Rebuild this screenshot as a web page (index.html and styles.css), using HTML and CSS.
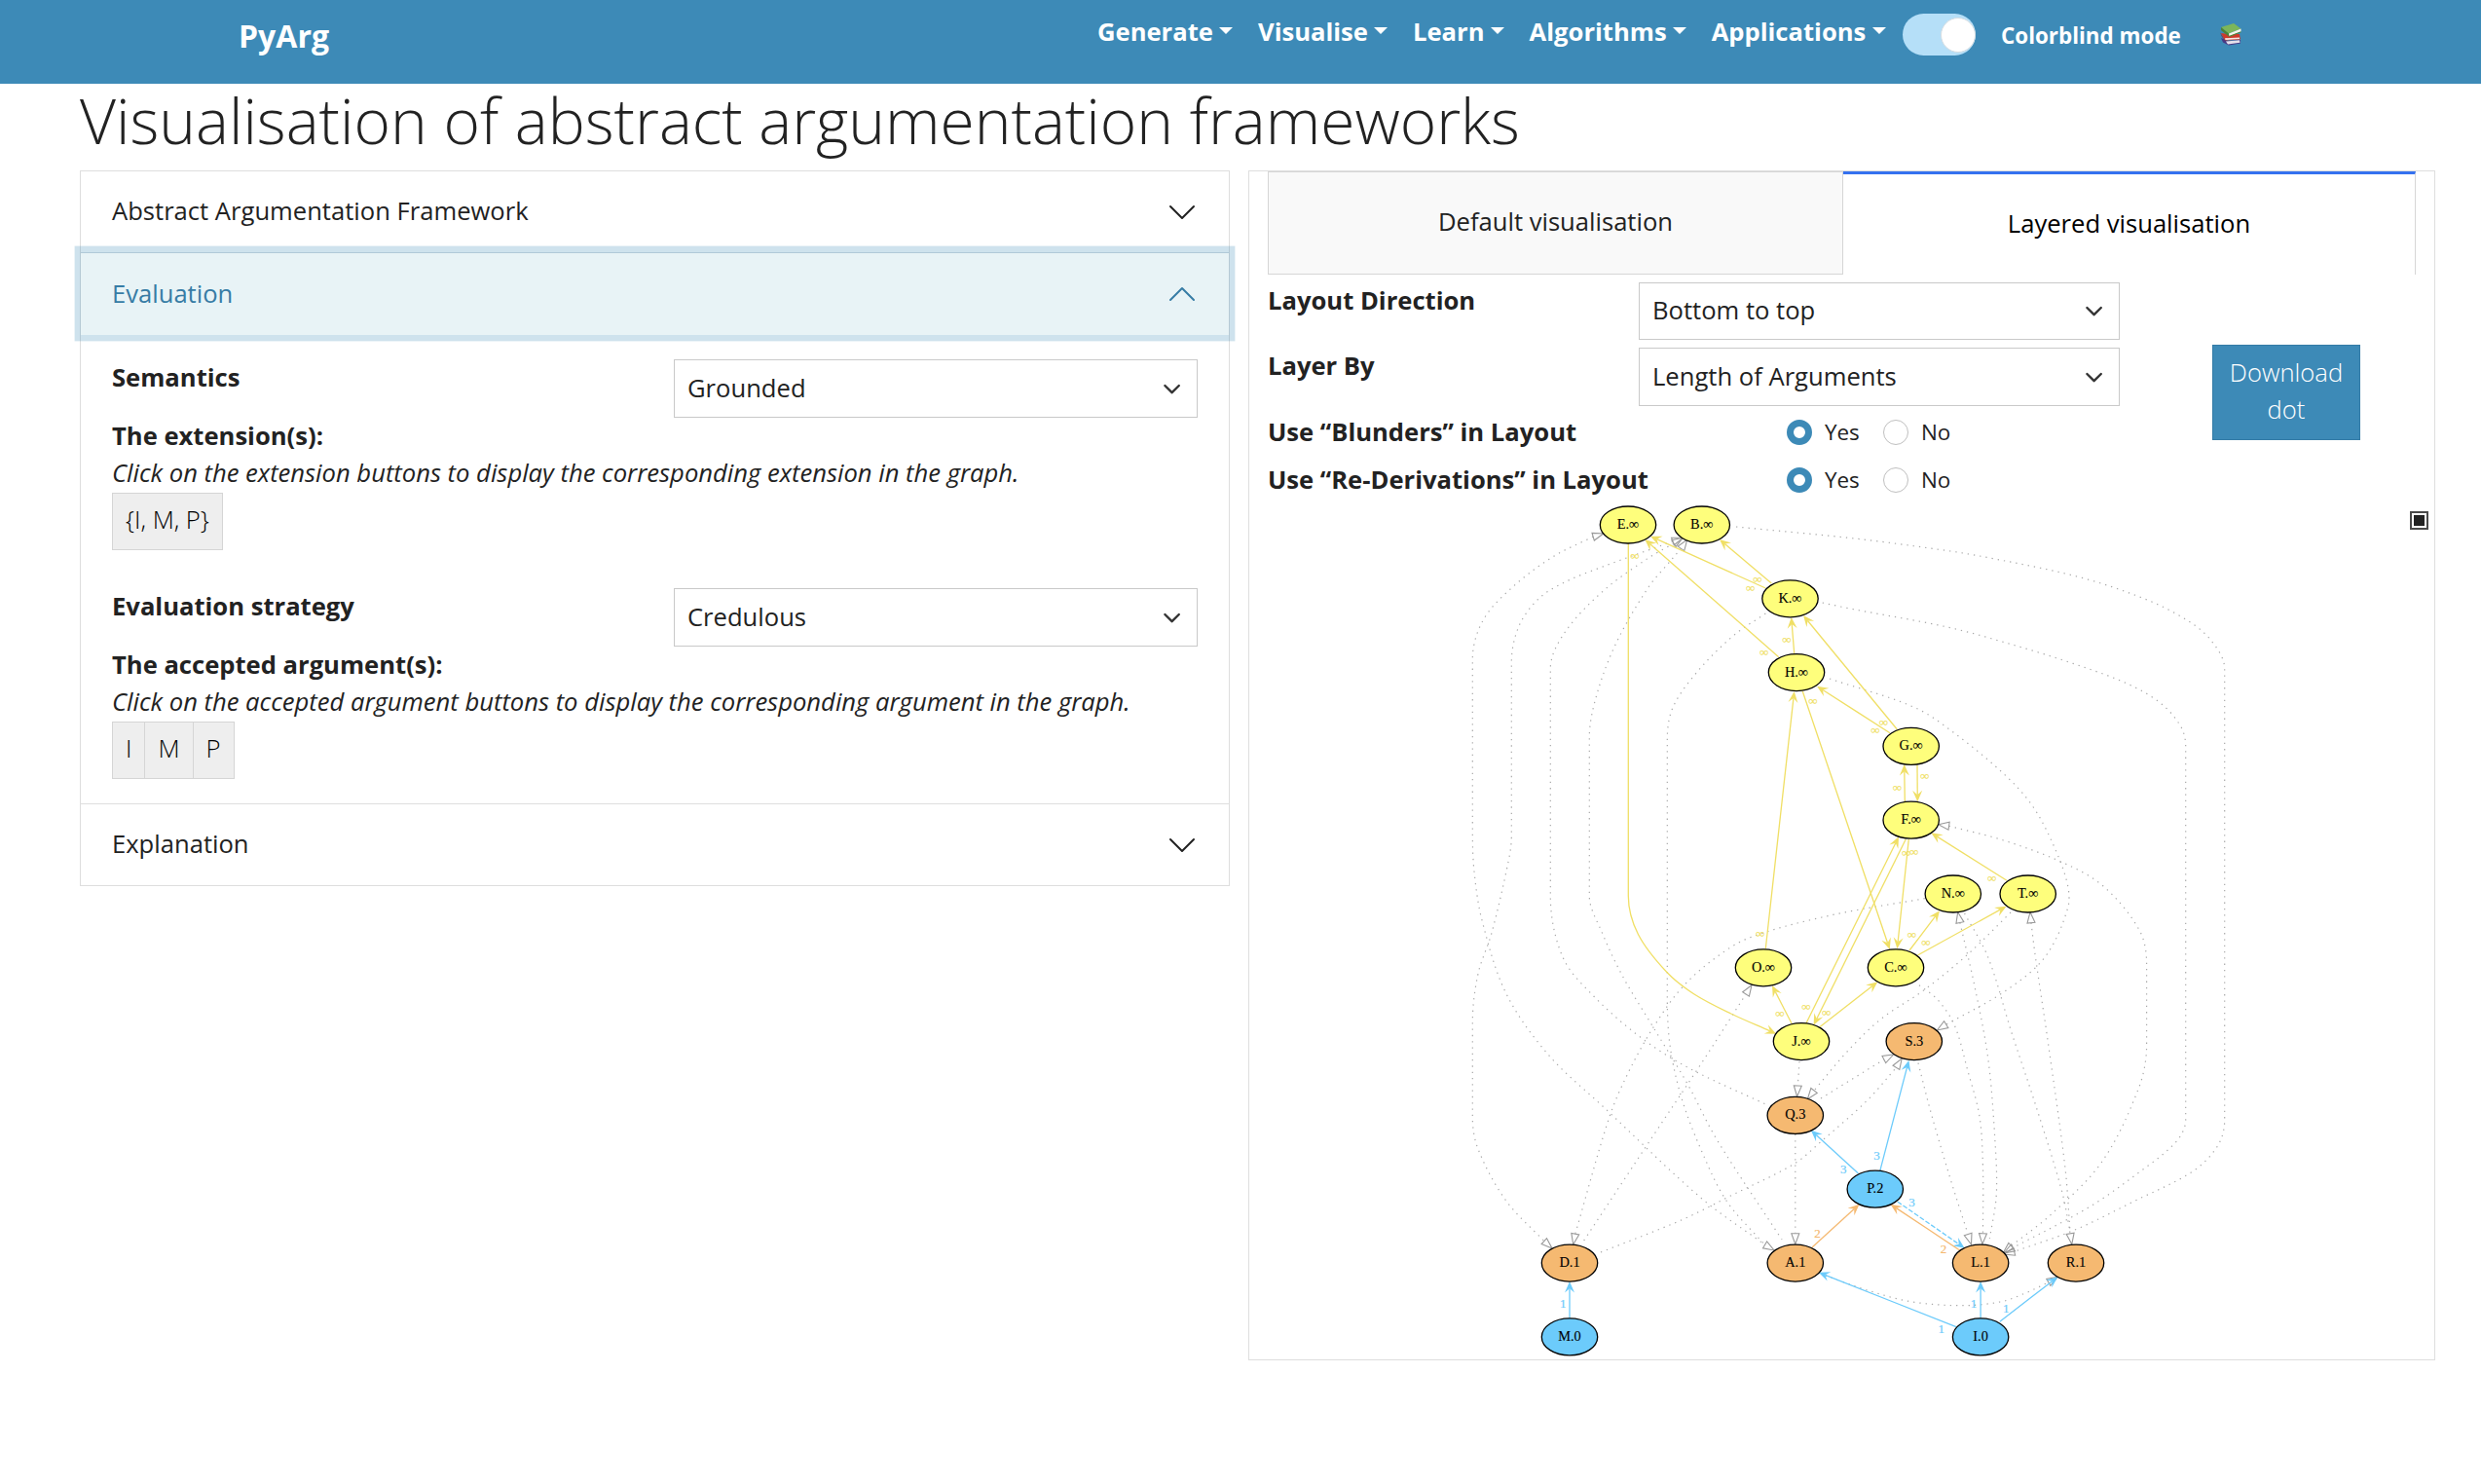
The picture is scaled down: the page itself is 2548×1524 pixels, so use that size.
FILE: index.html
```html
<!DOCTYPE html>
<html lang="en">
<head>
<meta charset="utf-8">
<title>PyArg</title>
<link rel="stylesheet" href="styles.css">
</head>
<body>
<nav class="navbar">
  <a class="brand">PyArg</a>
  <div class="menu">
    <a class="menu-item">Generate</a>
    <a class="menu-item">Visualise</a>
    <a class="menu-item">Learn</a>
    <a class="menu-item">Algorithms</a>
    <a class="menu-item">Applications</a>
  </div>
  <span class="switch"><span class="knob"></span></span>
  <span class="switch-label">Colorblind mode</span>
  <svg class="books" viewBox="0 0 22 23" width="22" height="23">
    <path d="M1 15 L3 19.5 L9 22.5 L21 20.5 L21 17 L8 18Z" fill="#463a86"/>
    <path d="M6 18.5 L20 17.2 L20.5 19.8 L8 21.6Z" fill="#e4e0ea"/>
    <path d="M1 10 L5 17.5 L21 16.5 L20 11 L9 11Z" fill="#cf3a2a"/>
    <path d="M5 15.3 L20 14.4 L20 16 L5.5 17Z" fill="#f4e8e4"/>
    <path d="M0 9 L4 16 L5 18 L1.5 13Z" fill="#7d2a3a"/>
    <path d="M1 4 L14 0 L21.5 5.5 L9 10.5Z" fill="#7cb65a"/>
    <path d="M1 4 L9 10.5 L9 13.5 L1 7Z" fill="#4c8435"/>
    <path d="M9 10.5 L21.5 5.5 L21.5 8.5 L9.5 13.3Z" fill="#f3f3ea"/>
    <path d="M9 13 L21.5 8.3 L21.5 9.2 L9.5 14Z" fill="#4c8435"/>
  </svg>
</nav>

<main class="page">
  <h1>Visualisation of abstract argumentation frameworks</h1>
  <div class="columns">
    <section class="accordion">
      <div class="acc-head">Abstract Argumentation Framework
        <svg class="chev" viewBox="0 0 16 16"><path d="M2 5l6 6 6-6"/></svg>
      </div>
      <div class="acc-head open">Evaluation
        <svg class="chev up" viewBox="0 0 16 16"><path d="M2 5l6 6 6-6"/></svg>
      </div>
      <div class="acc-body">
        <div class="field"><b>Semantics</b>
          <div class="select">Grounded<svg viewBox="0 0 16 16"><path d="M2 5l6 6 6-6"/></svg></div>
        </div>
        <b>The extension(s):</b>
        <i>Click on the extension buttons to display the corresponding extension in the graph.</i>
        <div class="buttons"><button>{I, M, P}</button></div>
        <div class="field"><b>Evaluation strategy</b>
          <div class="select">Credulous<svg viewBox="0 0 16 16"><path d="M2 5l6 6 6-6"/></svg></div>
        </div>
        <b>The accepted argument(s):</b>
        <i>Click on the accepted argument buttons to display the corresponding argument in the graph.</i>
        <div class="buttons"><button>I</button><button>M</button><button>P</button></div>
      </div>
      <div class="acc-head last">Explanation
        <svg class="chev" viewBox="0 0 16 16"><path d="M2 5l6 6 6-6"/></svg>
      </div>
    </section>

    <section class="panel">
      <div class="tabs">
        <div class="tab">Default visualisation</div>
        <div class="tab active">Layered visualisation</div>
      </div>
      <div class="controls">
        <div class="form">
          <div class="row"><b>Layout Direction</b>
            <div class="select">Bottom to top<svg viewBox="0 0 16 16"><path d="M2 5l6 6 6-6"/></svg></div>
          </div>
          <div class="row"><b>Layer By</b>
            <div class="select">Length of Arguments<svg viewBox="0 0 16 16"><path d="M2 5l6 6 6-6"/></svg></div>
          </div>
          <div class="row short"><b>Use “Blunders” in Layout</b>
            <div class="radios"><span class="radio on"></span><span>Yes</span><span class="radio"></span><span>No</span></div>
          </div>
          <div class="row short"><b>Use “Re-Derivations” in Layout</b>
            <div class="radios"><span class="radio on"></span><span>Yes</span><span class="radio"></span><span>No</span></div>
          </div>
        </div>
        <button class="download">Download<br>dot</button>
      </div>
      <div class="graph">
        <svg id="graph" viewBox="1283 515 1217 880" width="1217" height="880"></svg>
        <span class="fullscreen"></span>
      </div>
    </section>
  </div>
</main>
<script src="graph.js"></script>
</body>
</html>
```
FILE: styles.css
```css
* { box-sizing: border-box; }
html { font-size: 25.6px; }
body {
  margin: 0;
  background: #fff;
  color: #222;
  font-family: "Open Sans", sans-serif;
  font-size: 1rem;
  line-height: 1.5;
}

/* Navigation bar */
.navbar {
  height: 86px;
  background: #3d8ab7;
  color: #fff;
  font-weight: 700;
  display: flex;
  align-items: flex-start;
  padding-left: 245px;
}
.brand { font-size: 32px; line-height: 48px; margin-top: 13px; width: 882px; }
.menu { display: flex; gap: 25.6px; margin-top: 14px; width: 827px; }
.menu-item { display: flex; align-items: center; white-space: nowrap; }
.menu-item::after {
  content: "";
  margin-left: 6.5px;
  margin-top: -3px;
  border-top: 7px solid #fff;
  border-left: 7px solid transparent;
  border-right: 7px solid transparent;
}
.switch {
  width: 75px; height: 43px; margin-top: 14px;
  border-radius: 22px;
  background: #b5dff8;
  display: flex; justify-content: flex-end; align-items: center;
}
.knob { width: 36px; height: 36px; border-radius: 50%; background: #fff; border: 1px solid #d5dde2; }
.switch-label { margin: 19px 0 0 26px; width: 225px; font-size: 22.4px; line-height: 36px; white-space: nowrap; }
.books { margin-top: 24px; }

/* Page */
.page { padding: 0 47px 0 82px; }
h1 { margin: -1px 0 13px; font-weight: 300; font-size: 64px; line-height: 77px; }
.columns { display: flex; justify-content: space-between; align-items: flex-start; }

/* Accordion */
.accordion { width: 1181px; border: 1px solid #dedede; }
.acc-head {
  height: 83px; padding: 0 32px;
  display: flex; align-items: center; justify-content: space-between;
}
.acc-head.open {
  position: relative;
  height: 85px;
  background: #e8f3f6;
  color: #377ca5;
  border-top: 1px solid #b0c9d8;
  box-shadow: 0 0 0 6.4px rgba(61, 138, 183, .25);
}
.acc-head.last { border-top: 1px solid #dedede; height: 84px; }
.chev { width: 32px; height: 32px; fill: none; stroke: #222; stroke-linecap: round; stroke-linejoin: round; }
.chev.up { transform: rotate(180deg); stroke: #377ca5; }
.acc-body { padding: 25px 32px 0; height: 481px; display: flex; flex-direction: column; }
.acc-body > b, .acc-body > i { line-height: 38px; }
.field { display: flex; justify-content: space-between; height: 60px; flex: none; }
.field b { line-height: 38px; }
.field .select { width: 538px; height: 60px; padding-bottom: 0; }
.select {
  border: 1px solid #c9c9c9;
  background: #fff;
  padding: 0 13px 1px 13px;
  display: flex; align-items: center; justify-content: space-between;
}
.select svg {
  width: 19.2px; height: 19.2px; margin-right: 3px; margin-top: 1px;
  fill: none; stroke: #333; stroke-width: 2; stroke-linecap: round; stroke-linejoin: round;
}
.buttons { display: flex; margin-top: 1px; height: 97px; flex: none; align-items: flex-start; }
.buttons + .field { margin-top: 1px; }
.buttons:last-child { height: 60px; }
button {
  font: 300 1rem/38.4px "Open Sans", sans-serif;
  color: #000; background: #eee;
  border: 1px solid #d5d5d5;
  padding: 8px 13px 10px; height: 59px; margin: 0;
}
button + button { margin-left: -1px; }
.buttons button { flex: none; }

/* Visualisation panel */
.panel { width: 1219px; height: 1222px; border: 1px solid #dedede; }
.tabs { display: flex; height: 106px; padding: 0 19px 0 19px; }
.tab {
  flex: none; width: 591px;
  display: flex; align-items: center; justify-content: center;
  background: #f9f9f9; border: 1px solid #d6d6d6; padding-bottom: 2px;
}
.tab.active {
  width: 588px;
  background: #fff; color: #000;
  border: 0; border-top: 3px solid #3571ef; border-right: 1px solid #d6d6d6;
  padding-bottom: 1px;
}
.controls { display: flex; height: 233px; padding: 8px 0 0 19px; }
.form { width: 875px; }
.row { display: flex; justify-content: space-between; height: 67.4px; white-space: nowrap; }
.row.short { height: 49px; }
.row .select { width: 494px; height: 59px; }
.row + .row .select { height: 60px; padding-bottom: 0; }
.row b { line-height: 38px; }
.radios { display: flex; align-items: center; width: 342px; height: 38px; font-size: 22.4px; }
.radio { width: 26px; height: 26px; border: 1px solid #bfbfbf; border-radius: 50%; margin-right: 13px; }
.radio.on { border: 7px solid #3d8ab7; }
.radio.on + span { width: 60px; }
.download {
  width: 152px; height: 98px; margin: 64px 0 0 95px;
  background: #3d8ab7; border-color: #337ba6; color: #fff;
}

/* Graph */
.graph { position: relative; height: 880px; }
.graph svg { display: block; font-family: "Liberation Serif", serif; text-anchor: middle; }
.fullscreen {
  position: absolute; right: 6px; top: 10px;
  width: 19px; height: 19px;
  border: 2px solid #4a4a4a; background: #222;
  box-shadow: inset 0 0 0 2px #fff;
}
.node { stroke: #000; stroke-width: 1.3; }
.node-text { font-size: 14.4px; fill: #000; stroke: #000; stroke-width: .1; }
.edge { fill: none; stroke-width: 1.3; }
.edge-text { font-size: 13px; stroke-width: .2; }
.dotted { fill: none; stroke: #a8a8a8; stroke-width: 1.2; stroke-dasharray: 1.3 5; }
.hollow { fill: none; stroke: #999; stroke-width: 1.1; }
```
FILE: graph.js
```js
const YELLOW = '#f0df65', BLUE = '#6ccbfb', ORANGE = '#f5b971';
const FILL = { y: '#fefe7c', b: '#6ccbfb', o: '#f5b971' };
const svg = document.getElementById('graph');

function add(tag, attrs, text) {
  const el = document.createElementNS('http://www.w3.org/2000/svg', tag);
  for (const k in attrs) el.setAttribute(k, attrs[k]);
  if (text) el.textContent = text;
  svg.appendChild(el);
}

// Smooth curve through all points (Catmull-Rom converted to cubic Béziers)
function curve(p) {
  let d = `M${p[0]}`;
  for (let i = 0; i < p.length - 1; i++) {
    const a = p[i - 1] || p[i], b = p[i], c = p[i + 1], e = p[i + 2] || c;
    const len = Math.hypot(c[0] - b[0], c[1] - b[1]);
    const t1 = Math.hypot(c[0] - a[0], c[1] - a[1]) || 1;
    const t2 = Math.hypot(e[0] - b[0], e[1] - b[1]) || 1;
    // Long vertical runs stay straight
    if (b[0] === c[0] && len > 80) { d += `L${c}`; continue; }
    const s1 = len / 3 / t1, s2 = len / 3 / t2;
    let c1 = [b[0] + (c[0] - a[0]) * s1, b[1] + (c[1] - a[1]) * s1];
    let c2 = [c[0] - (e[0] - b[0]) * s2, c[1] - (e[1] - b[1]) * s2];
    if (a[0] === b[0] && Math.abs(a[1] - b[1]) > 80) c1 = [b[0], b[1] + Math.sign(b[1] - a[1]) * len / 3];
    if (e[0] === c[0] && Math.abs(e[1] - c[1]) > 80) c2 = [c[0], c[1] - Math.sign(e[1] - c[1]) * len / 3];
    d += `C${c1} ${c2} ${c}`;
  }
  return d;
}

function pairs(s) { return s.trim().split(/\s+/).map(q => q.split(',').map(Number)); }

// Returns the head's corner points and the place where the line meets its base
function head(tip, from, len, half) {
  const d = Math.hypot(tip[0] - from[0], tip[1] - from[1]);
  const ux = (tip[0] - from[0]) / d, uy = (tip[1] - from[1]) / d;
  const base = [tip[0] - ux * len, tip[1] - uy * len];
  return {
    base,
    left: [base[0] - uy * half, base[1] + ux * half],
    right: [base[0] + uy * half, base[1] - ux * half],
    notch: [tip[0] - ux * len * 0.62, tip[1] - uy * len * 0.62]
  };
}

// Dotted constraints: points, then which ends carry a hollow triangle
const dotted = [
  ['1646.7,548 1635.7,551.3 1595,571.7 1553.3,603 1523.3,636.7 1512.3,676.7 1512.3,853 1514,895 1522,945 1546.7,1020 1590,1083 1646.7,1136.7 1746.7,1230 1812,1278 1822,1284', 'se'],
  ['1728.3,552.3 1718,556 1646.7,581.7 1606.7,598 1580,615 1560,643 1552.3,680 1552.3,860 1548,890 1531.7,959 1518,1000 1512.3,1050 1512.3,1146.7 1518,1180 1546.7,1233 1584,1273 1594,1282', 'se'],
  ['1728.3,552.3 1719,558 1693,573 1646.7,606.7 1606.7,650 1592.3,686.7 1592.3,920 1605,983 1636.7,1023 1686.7,1066.7 1736.7,1098 1813.3,1134', 's'],
  ['1732.7,554.3 1726,564 1715,576.7 1693,603 1660,660 1640,713 1632.3,756.7 1632.3,920 1645,957 1666.7,1003 1696.7,1053 1733,1113 1763,1170 1830,1273', 's'],
  ['1813.3,630 1780,653 1743,690 1718,726.7 1712.3,760 1712.3,1020 1715,1073 1726.7,1126.7 1746.7,1180 1773,1233 1812,1278', ''],
  ['1976.7,922.7 1880,940 1796.7,963 1760,985 1726.7,1015 1698,1055 1673,1100 1653,1146.7 1618,1266 1615.7,1278', 'e'],
  ['1626.7,1274 1696.7,1168 1746.7,1093 1793,1021 1799,1011.7', 'e'],
  ['1644,1286 1726.7,1253 1780,1226.7 1843,1195 1869.5,1173 1917.7,1130 1947,1097 1953.2,1087', 'e'],
  ['1848,1090 1846.3,1115 1845.6,1126', 'e'],
  ['1843.8,1165 1843.8,1266 1843.8,1277.7', 'e'],
  ['2065,937 2021,980 1976,1016.7 1931.5,1046.7 1897,1080 1863,1120 1856.4,1128.7', 'e'],
  ['1870,1128 1935,1088 1944.6,1083', 'e'],
  ['1879,697 1966.7,726.7 2010,755 2060,796.7 2086.7,826.7 2106.7,863 2123,906.7 2123.5,933 2100,983 2059,1018 1999,1052 1989.4,1058', 'e'],
  ['1990.7,846.7 2002,848.3 2056.7,862.7 2116.7,885 2160,910 2197,955 2204.6,990 2204.6,1073 2196.7,1116.7 2158.8,1193 2107,1246.7 2066,1279 2057.2,1286.7', 'se'],
  ['1871.7,619 1900,625 2000,644 2066.7,662 2133,682.7 2186.7,703 2220,723 2240,746.7 2244.7,766.7 2244.7,1150 2234.5,1173 2193,1206.7 2145,1240 2068,1281 2058,1287', 'e'],
  ['1783,541 1900,552.5 1980,562.7 2033,571 2133,592 2200,614 2243,635 2270,656.7 2284.7,687 2284.7,1150 2277.6,1176.7 2251.8,1203 2193,1233 2131,1263 2070,1285 2058,1288', 'e'],
  ['2010.7,936.7 2013,948 2028,1013 2041.7,1086.7 2048.6,1166.7 2050.3,1226.7 2043.4,1272', 's'],
  ['2017.6,938 2041.7,983 2065.8,1060 2090,1133 2117.5,1223 2126,1265', ''],
  ['2085,936.7 2086,948 2090,980 2103.7,1073 2121,1200 2126,1266 2127.8,1277.7', 'se'],
  ['1971,1011.7 1990,1026.7 2007.3,1053 2021,1100 2033,1146.7 2036.5,1200 2036.5,1266 2035.9,1277.7', 'e'],
  ['1970,1091.7 1983.2,1143 2003.8,1213 2021,1267 2024.5,1278', 'e'],
  ['1874.7,1310 1917.7,1325 1962.5,1336.7 2014,1340.7 2055.5,1336.7 2083,1326.7 2103.5,1317 2113.3,1311.3', 'e']
];

for (const [s, ends] of dotted) {
  let p = pairs(s);
  for (const e of ends) {
    if (e === 's') p.reverse();
    const tip = p[p.length - 1];
    const h = head(tip, p[p.length - 2], 11, 4);
    add('path', { class: 'hollow', d: `M${tip}L${h.left}L${h.right}Z` });
    p[p.length - 1] = h.base;
    if (Math.hypot(p[p.length - 2][0] - h.base[0], p[p.length - 2][1] - h.base[1]) < 2.5) p.splice(p.length - 2, 1);
    if (e === 's') p.reverse();
  }
  add('path', { class: 'dotted', d: curve(p) });
}

// Attacks: points from source to target, colour, dashed
const edges = [
  ['1672.3,558 1672.3,920 1682.3,959.3 1711.7,998.3 1740,1021 1777.7,1041 1824.3,1061.7', YELLOW],
  ['1813.3,604 1695,550.7', YELLOW],
  ['1826.7,674.7 1689.3,554', YELLOW],
  ['1819.3,599 1766,554', YELLOW],
  ['1842.7,671 1839.7,634', YELLOW],
  ['1948.3,749 1852,632', YELLOW],
  ['1941,752.7 1866,704.7', YELLOW],
  ['1813.3,974.3 1842.7,710', YELLOW],
  ['1851.3,710 1940.8,975', YELLOW],
  ['1956.3,823.3 1955.7,785', YELLOW],
  ['1969,785.7 1969.3,823.3', YELLOW],
  ['1855,1050.7 1950,859.3', YELLOW],
  ['1957.3,861.7 1862.6,1052.7', YELLOW],
  ['1960.3,861.7 1948.4,974.3', YELLOW],
  ['2061,904.3 1983.3,855.3', YELLOW],
  ['1961,976 1992,935.3', YELLOW],
  ['1969.4,981 2060.6,930.7', YELLOW],
  ['1840,1051 1820,1012', YELLOW],
  ['1868.8,1054.7 1928.4,1008.3', YELLOW],
  ['1612,1353.5 1612,1316', BLUE],
  ['1908.4,1205 1859.9,1160.7', BLUE],
  ['1930.8,1202.3 1960.4,1089', BLUE],
  ['1948.7,1234 2017.6,1281.7', BLUE, '5 2'],
  ['2009,1362.7 1867.8,1306.7', BLUE],
  ['2034.1,1353.3 2034.1,1316', BLUE],
  ['2053.8,1357.3 2113.3,1311.3', BLUE],
  ['1861,1281 1909.5,1236.7', ORANGE],
  ['2014.2,1285 1941.5,1236.7', ORANGE]
];

for (const [s, color, dash] of edges) {
  const p = pairs(s);
  const tip = p[p.length - 1];
  const h = head(tip, p[p.length - 2], 11.5, 5);
  p[p.length - 1] = h.notch;
  const attrs = { class: 'edge', stroke: color, d: curve(p) };
  if (dash) attrs['stroke-dasharray'] = dash;
  add('path', attrs);
  add('path', { fill: color, d: `M${tip}L${h.left}L${h.notch}L${h.right}Z` });
}

const labels = [
  [YELLOW, '∞', '1679,571.7 1805,595.7 1797.7,604.7 1811.7,670.7 1835,657.7 1862,720.7 1934.3,743 1926,751 1948.3,809.7 1976.7,797.7 1957.7,877 1965.7,875.7 2045.7,902.7 1807.7,959.7 1828,1041.7 1855,1034.7 1875.7,1040.7 1963.5,960.7 1978,968.7'],
  [BLUE, '1', '1605.3,1339 1993.8,1364.3 2027,1339 2060.3,1344'],
  [BLUE, '3', '1893.3,1201 1927.4,1187 1963.5,1235'],
  [ORANGE, '2', '1866.4,1267 1996,1283']
];
for (const [color, text, at] of labels)
  for (const [x, y] of pairs(at))
    add('text', { class: 'edge-text', fill: color, stroke: color, x, y: y + (text === '∞' ? 3.4 : 4.2) }, text);

const nodes = [
  ['E.∞', 1672, 539, 'y'], ['B.∞', 1747.8, 539, 'y'], ['K.∞', 1838.5, 614.8, 'y'],
  ['H.∞', 1845, 690.6, 'y'], ['G.∞', 1962.7, 766.4, 'y'], ['F.∞', 1962.7, 842.2, 'y'],
  ['N.∞', 2005.8, 918, 'y'], ['T.∞', 2082.7, 918, 'y'], ['O.∞', 1811, 993.8, 'y'],
  ['C.∞', 1947, 993.8, 'y'], ['J.∞', 1850, 1069.6, 'y'], ['S.3', 1965.8, 1069.6, 'o'],
  ['Q.3', 1843.8, 1145.4, 'o'], ['P.2', 1925.8, 1221.2, 'b'], ['D.1', 1612, 1297.1, 'o'],
  ['A.1', 1843.8, 1297.1, 'o'], ['L.1', 2034.1, 1297.1, 'o'], ['R.1', 2132, 1297.1, 'o'],
  ['M.0', 1612, 1372.9, 'b'], ['I.0', 2034.1, 1372.9, 'b']
];
for (const [name, x, y, kind] of nodes) {
  add('ellipse', { class: 'node', cx: x, cy: y, rx: 28.7, ry: 19, fill: FILL[kind] });
  add('text', { class: 'node-text', x, y: y + 4 }, name);
}
```
